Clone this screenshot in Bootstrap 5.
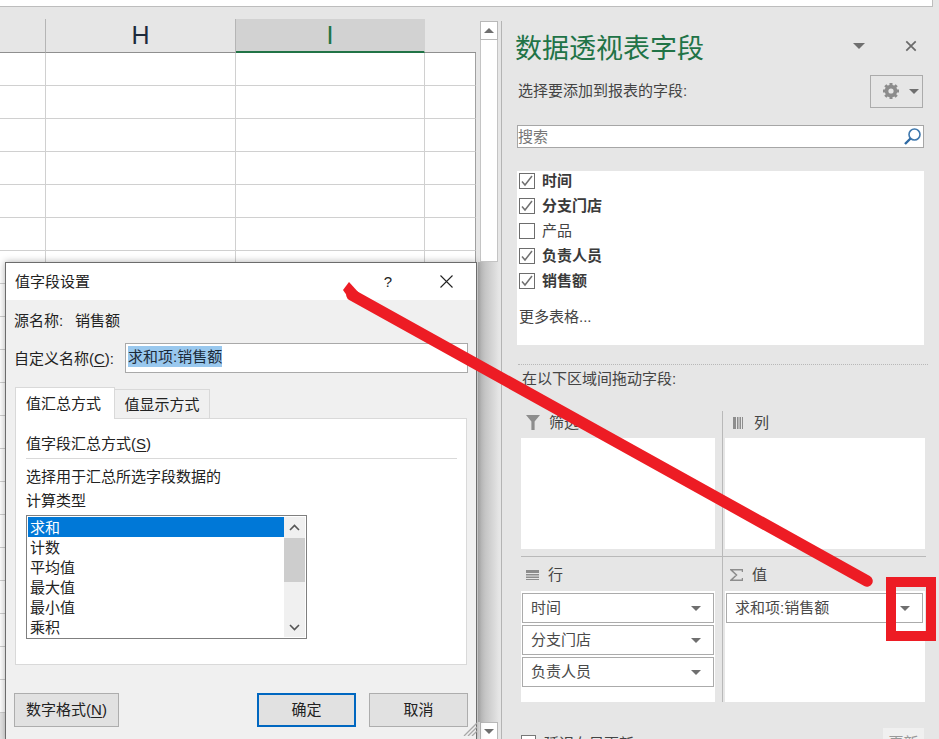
<!DOCTYPE html>
<html lang="zh-CN">
<head>
<meta charset="utf-8">
<title>数据透视表字段</title>
<link href="https://cdn.jsdelivr.net/npm/bootstrap@5.3.0/dist/css/bootstrap.min.css" rel="stylesheet">
<style>
html,body{height:739px;overflow:hidden}
body{background:#e6e6e6;color:#262626;font-family:"Liberation Sans","Noto Sans CJK SC",sans-serif;font-size:15px;line-height:20px;position:relative}
.top-strip{height:7px;width:933px;background:#fff;border-bottom:1px solid #bdbdbd;border-right:1px solid #bdbdbd}
.work{height:732px}
.sheet-side{width:501px;padding-top:12px;flex:none}
.grid-sheet{width:476px;flex:none;border-collapse:separate;border-spacing:0;table-layout:fixed;align-self:flex-start}
.grid-sheet th{height:34px;background:#e6e6e6;border-right:1px solid #b5b5b5;border-bottom:1px solid #8f8f8f;font-family:"Liberation Sans",sans-serif;font-weight:400;font-size:25px;line-height:1;text-align:center;color:#1e2a3c;padding:0}
.grid-sheet th.sel{background:#d2d2d2;color:#217346;border-bottom:2px solid #217346;border-right-color:#d2d2d2}
.grid-sheet th.end{border-right:0;border-bottom-color:#8f8f8f}
.grid-sheet td{height:33px;background:#fff;border-right:1px solid #d0d0d0;border-bottom:1px solid #d0d0d0;padding:0}
.grid-sheet td:last-child{border-right-color:#a0a0a0}
.v-scroll{width:18px;margin-left:4px;flex:none;height:717px;margin-top:2px}
.sb-btn{height:19px;background:#fff;border:1px solid #b8b8b8;display:flex;align-items:center;justify-content:center}
.sb-track{height:222px;background:#fff;border:1px solid #c4c4c4;border-top:0}
.sb-thumb{height:460px;margin-left:-2px;margin-right:-1px;background:linear-gradient(90deg,#b4b4b4,#dedede 85%,#e6e6e6)}
.tri{display:inline-block;width:0;height:0;border-left:5px solid transparent;border-right:5px solid transparent;border-top:5px solid #6f6f6f}
.tri.up{border-top:0;border-bottom:5px solid #6f6f6f}
.tri.big{border-left-width:6px;border-right-width:6px;border-top-width:6px}
.pane{flex:1;border-left:1px solid #b4b4b4;margin-top:14px;padding-left:15px;color:#444}
.pane-head{height:54px;width:407px}
.pane-title{font-size:27px;line-height:54px;color:#217346;font-weight:400;margin:2px 0 0 -2px}
.pane-tools{gap:40px;margin:0 7px 4px 0}
.pick-row{height:32px;width:407px;margin-top:0}
.pick-text{margin-left:1px}
.gear-btn{width:53px;height:33px;margin-right:1px;border:1px solid #ababab;gap:9px;padding:0 0 0 11px;border-radius:0;background:#e6e6e6}
.find-box{width:407px;height:23px;margin-top:18px;border:1px solid #a6a6a6;background:#fff;padding:0 1px 0 0;color:#777;line-height:21px}
.field-box{width:407px;height:174px;margin-top:23px;background:#fff;padding:1px 2px}
.field-row{height:18px;margin-bottom:7px;gap:7px;line-height:18px}
.field-row span{margin-top:-1px}
.field-row .form-check-input{width:16px;height:16px;margin:0;flex:none;border:1px solid #6d6d6d;border-radius:0;background-color:#fff;opacity:1}
.field-row .form-check-input:checked{background-color:#fff;border-color:#6d6d6d;background-image:url("data:image/svg+xml,%3csvg xmlns='http://www.w3.org/2000/svg' viewBox='0 0 16 16'%3e%3cpath fill='none' stroke='%23707070' stroke-width='1.5' d='M3 8.5l3 3.5 7-9'/%3e%3c/svg%3e");background-size:16px}
.field-on{font-weight:700;color:#3a3a3a}
.more-link{margin-top:18px;line-height:18px}
.dots{width:410px;margin:19px 0 0 1px;border-top:1px dotted #b8b8b8}
.drag-tip{margin:4px 0 0 5px}
.areas{margin:22px 0 0 4px;width:405px;display:grid;grid-template-columns:202px 203px}
.area{display:flex;flex-direction:column}
.area.left{border-right:1px solid #b9b9b9}
.area.r1{height:146px;padding-bottom:7px;border-bottom:1px solid #b9b9b9}
.area.r2{height:145px}
.area.right{padding-left:2px}
.area-head{height:27px;gap:9px;padding-left:5px;padding-bottom:4px;flex:none}
.area-head.wide-gap{gap:10px}
.r2 .area-head{height:34px;padding-bottom:0;padding-top:2px}
.area-body{flex:1;background:#fff;width:194px;padding:2px 1px;}
.right .area-body{width:200px}
.pill{height:30px;border:1px solid #ababab;margin-bottom:2px;padding:0 8px;width:192px;color:#4a4a4a}
.right .pill{width:197px}
.defer{margin:26px 0 0 4px;width:403px;height:20px}
.defer-box{width:15px;height:15px;background:#fff;border:1px solid #777;display:inline-block;margin-top:7px;flex:none}
.defer-text{padding-top:6px}
.defer-btn{width:41px;height:24px;background:#f0f0f0;color:#999;text-align:center;line-height:30px}
.dlg{position:absolute;left:5px;top:262px;width:472px;height:480px;background:#f0f0f0;border:1px solid #6c6c6c;box-shadow:0 0 7px rgba(0,0,0,.32);color:#222}
.dlg-title{height:37px;background:#fff;padding:0 9px;line-height:37px}
.dlg-title .ctl{gap:48px;margin-right:14px}
.dlg-main{padding:11px 8px 0}
.src-label{width:61px}
.custom-row{margin-top:12px;height:30px}
.custom-row label{width:111px;flex:none;padding-top:2px}
.custom-input{width:345px;height:30px;background:#fff;border:1px solid #a9a9a9;padding:2px 2px}
.custom-input span{background:#99c8ee;display:inline-block;line-height:21px;color:#1b2a38}
.dlg-tabs{margin:14px 0 0 1px;border-bottom:0;position:relative;z-index:1;height:31px;align-items:flex-end}
.dlg-tabs .nav-link{border-radius:0;padding:0;color:#222;text-align:center;margin:0}
.dlg-tabs .nav-link.active{width:100px;height:32px;line-height:32px;padding-right:3px;background:#fff;border:1px solid #d9d9d9;border-bottom:0;margin-bottom:-1px;color:#222}
.dlg-tabs .nav-link.idle{width:95px;height:29px;line-height:30px;background:#f0f0f0;border:1px solid #d9d9d9;border-left:0;border-bottom:0}
.tab-panel{width:452px;height:247px;margin-left:1px;background:#fff;border:1px solid #d9d9d9;padding:15px 9px 0 10px}
.tab-rule{width:431px;margin:4px 0 8px;border-top:1px solid #d9d9d9}
.calc-label{margin-top:4px}
.calc-list{width:281px;height:124px;margin-top:4px;border:1px solid #7f7f7f;background:#fff;padding:1px}
.calc-items{flex:1;line-height:22px}
.calc-items div{height:20px;padding-left:2px}
.calc-items .cur{background:#0078d7;color:#fff}
.calc-scroll{width:21px;height:100%;background:#f0f0f0}
.calc-ar{height:20px}
.calc-th{height:44px;background:#cdcdcd;margin-top:1px}
.calc-sp{flex:1}
.dlg-btns{margin-top:28px;width:454px}
.dlg-btn{height:34px;width:99px;border:1px solid #adadad;background:#e1e1e1;border-radius:0;padding:0;color:#222;font-size:15px;line-height:20px}
.dlg-btn.wide{width:105px}
.dlg-btn.main-btn{border:2px solid #0067c0;margin-right:13px}
.grip{position:absolute;left:457px;top:459px}
.ink{position:absolute;left:0;top:0;pointer-events:none;z-index:5}
u{text-underline-offset:2px}
</style>
</head>
<body>
<div class="top-strip"></div>
<div class="work d-flex">
  <div class="sheet-side d-flex">
    <table class="grid-sheet">
      <colgroup><col style="width:46px"><col style="width:190px"><col style="width:189px"><col style="width:51px"></colgroup>
      <thead><tr><th></th><th>H</th><th class="sel">I</th><th class="end"></th></tr></thead>
      <tbody>
        <tr><td></td><td></td><td></td><td></td></tr><tr><td></td><td></td><td></td><td></td></tr>
        <tr><td></td><td></td><td></td><td></td></tr><tr><td></td><td></td><td></td><td></td></tr>
        <tr><td></td><td></td><td></td><td></td></tr><tr><td></td><td></td><td></td><td></td></tr>
        <tr><td></td><td></td><td></td><td></td></tr><tr><td></td><td></td><td></td><td></td></tr>
        <tr><td></td><td></td><td></td><td></td></tr><tr><td></td><td></td><td></td><td></td></tr>
        <tr><td></td><td></td><td></td><td></td></tr><tr><td></td><td></td><td></td><td></td></tr>
        <tr><td></td><td></td><td></td><td></td></tr><tr><td></td><td></td><td></td><td></td></tr>
        <tr><td></td><td></td><td></td><td></td></tr><tr><td></td><td></td><td></td><td></td></tr>
        <tr><td></td><td></td><td></td><td></td></tr><tr><td></td><td></td><td></td><td></td></tr>
        <tr><td></td><td></td><td></td><td></td></tr><tr><td></td><td></td><td></td><td></td></tr>
      </tbody>
    </table>
    <div class="v-scroll">
      <div class="sb-btn"><span class="tri up"></span></div>
      <div class="sb-track"></div>
      <div class="sb-thumb"></div>
      <div class="sb-btn"><span class="tri"></span></div>
    </div>
  </div>

  <aside class="pane">
    <div class="pane-head d-flex align-items-center justify-content-between">
      <h1 class="pane-title">数据透视表字段</h1>
      <div class="pane-tools d-flex align-items-center">
        <span class="tri big"></span>
        <svg width="12" height="12" viewBox="0 0 14 14"><path d="M1.500 1.500l11 11M12.500 1.500l-11 11" stroke="#6a6a6a" stroke-width="2" fill="none"/></svg>
      </div>
    </div>
    <div class="pick-row d-flex align-items-center justify-content-between">
      <span class="pick-text">选择要添加到报表的字段:</span>
      <div class="gear-btn d-flex align-items-center">
        <svg width="18" height="18" viewBox="0 0 18 18"><circle cx="9" cy="9" r="4.600" fill="none" stroke="#8c8c8c" stroke-width="3.400"/><path d="M9 1v16M1 9h16M3.300 3.300l11.400 11.400M14.700 3.300L3.300 14.700" stroke="#8c8c8c" stroke-width="3"/><circle cx="9" cy="9" r="2.600" fill="#e6e6e6"/></svg>
        <span class="tri"></span>
      </div>
    </div>
    <div class="find-box d-flex align-items-center justify-content-between">
      <span>搜索</span>
      <svg width="19" height="19" viewBox="0 0 19 19"><circle cx="11.500" cy="7.500" r="5.500" fill="none" stroke="#3f78ad" stroke-width="1.600"/><path d="M7.500 11.500L2 17" stroke="#2f6aa3" stroke-width="2.400"/></svg>
    </div>
    <div class="field-box">
      <div class="field-row d-flex align-items-center"><input class="form-check-input" type="checkbox" checked aria-label="时间"><span class="field-on">时间</span></div>
      <div class="field-row d-flex align-items-center"><input class="form-check-input" type="checkbox" checked aria-label="分支门店"><span class="field-on">分支门店</span></div>
      <div class="field-row d-flex align-items-center"><input class="form-check-input" type="checkbox" aria-label="产品"><span>产品</span></div>
      <div class="field-row d-flex align-items-center"><input class="form-check-input" type="checkbox" checked aria-label="负责人员"><span class="field-on">负责人员</span></div>
      <div class="field-row d-flex align-items-center"><input class="form-check-input" type="checkbox" checked aria-label="销售额"><span class="field-on">销售额</span></div>
      <div class="more-link">更多表格...</div>
    </div>
    <div class="dots"></div>
    <div class="drag-tip">在以下区域间拖动字段:</div>
    <div class="areas">
      <section class="area left r1">
        <div class="area-head d-flex align-items-center">
          <svg width="14" height="15" viewBox="0 0 14 15"><path d="M0 0h14L8.600 6.500V15H5.400V6.500z" fill="#8d8d8d"/></svg><span>筛选</span>
        </div>
        <div class="area-body"></div>
      </section>
      <section class="area right r1">
        <div class="area-head wide-gap d-flex align-items-center ps-2">
          <svg width="11" height="12" viewBox="0 0 11 12"><path d="M0 0h3v12H0zM4 0h1.500v12H4zM6.500 0h1.500v12H6.500zM9 0h1v12H9z" fill="#8d8d8d"/></svg><span>列</span>
        </div>
        <div class="area-body"></div>
      </section>
      <section class="area left r2">
        <div class="area-head d-flex align-items-center">
          <svg width="13" height="11" viewBox="0 0 13 11"><path d="M0 0h13v3H0zM0 4h13v1.500H0zM0 6.500h13V8H0zM0 9h13v1H0z" fill="#8d8d8d"/></svg><span>行</span>
        </div>
        <div class="area-body">
          <div class="pill d-flex align-items-center justify-content-between"><span>时间</span><span class="tri me-1"></span></div>
          <div class="pill d-flex align-items-center justify-content-between"><span>分支门店</span><span class="tri me-1"></span></div>
          <div class="pill d-flex align-items-center justify-content-between"><span>负责人员</span><span class="tri me-1"></span></div>
        </div>
      </section>
      <section class="area right r2">
        <div class="area-head d-flex align-items-center">
          <svg width="13" height="12" viewBox="0 0 13 12"><path d="M12.500 3V.8H1L6.500 6 1 11.200h11.500V9" fill="none" stroke="#8d8d8d" stroke-width="1.500"/></svg><span>值</span>
        </div>
        <div class="area-body">
          <div class="pill d-flex align-items-center justify-content-between"><span>求和项:销售额</span><span class="tri me-1"></span></div>
        </div>
      </section>
    </div>
    <div class="defer d-flex justify-content-between">
      <div class="d-flex gap-2"><span class="defer-box"></span><span class="defer-text">延迟布局更新</span></div>
      <div class="defer-btn">更新</div>
    </div>
  </aside>
</div>

<div class="dlg" role="dialog" aria-label="值字段设置">
  <div class="dlg-title d-flex justify-content-between align-items-center">
    <span>值字段设置</span>
    <div class="ctl d-flex align-items-center">
      <span>?</span>
      <svg width="13" height="13" viewBox="0 0 13 13"><path d="M.5.500l12 12M12.500.5l-12 12" stroke="#222" stroke-width="1.100" fill="none"/></svg>
    </div>
  </div>
  <div class="dlg-main">
    <div class="d-flex"><span class="src-label">源名称:</span><span>销售额</span></div>
    <div class="custom-row d-flex align-items-center">
      <label>自定义名称(<u>C</u>):</label>
      <div class="custom-input"><span>求和项:销售额</span></div>
    </div>
    <ul class="nav nav-tabs dlg-tabs">
      <li class="nav-item"><a class="nav-link active" href="#">值汇总方式</a></li>
      <li class="nav-item"><a class="nav-link idle" href="#">值显示方式</a></li>
    </ul>
    <div class="tab-panel">
      <div>值字段汇总方式(<u>S</u>)</div>
      <div class="tab-rule"></div>
      <div>选择用于汇总所选字段数据的</div>
      <div class="calc-label">计算类型</div>
      <div class="calc-list d-flex">
        <div class="calc-items">
          <div class="cur">求和</div><div>计数</div><div>平均值</div><div>最大值</div><div>最小值</div><div>乘积</div>
        </div>
        <div class="calc-scroll d-flex flex-column">
          <div class="calc-ar d-flex align-items-center justify-content-center"><svg width="11" height="7" viewBox="0 0 11 7"><path d="M1 6l4.500-4.500L10 6" fill="none" stroke="#555" stroke-width="1.600"/></svg></div>
          <div class="calc-th"></div>
          <div class="calc-sp"></div>
          <div class="calc-ar d-flex align-items-center justify-content-center"><svg width="11" height="7" viewBox="0 0 11 7"><path d="M1 1l4.500 4.500L10 1" fill="none" stroke="#555" stroke-width="1.600"/></svg></div>
        </div>
      </div>
    </div>
    <div class="dlg-btns d-flex">
      <button type="button" class="btn dlg-btn wide me-auto">数字格式(<u>N</u>)</button>
      <button type="button" class="btn dlg-btn main-btn">确定</button>
      <button type="button" class="btn dlg-btn">取消</button>
    </div>
  </div>
  <svg class="grip" width="14" height="14" viewBox="0 0 14 14"><path d="M14 1L1 14M14 5L5 14M14 9L9 14" stroke="#a8a8a8" stroke-width="1.300" fill="none"/></svg>
</div>

<svg class="ink" width="939" height="739" viewBox="0 0 939 739">
  <path d="M352 295L867 581" stroke="#ed1c24" stroke-width="11.500" stroke-linecap="round" fill="none"/>
  <polygon points="349,282 343,290 350,300 359,293" fill="#ed1c24"/>
  <path d="M891 582h40v54h-40z" fill="none" stroke="#ed1c24" stroke-width="10"/>
</svg>
</body>
</html>
